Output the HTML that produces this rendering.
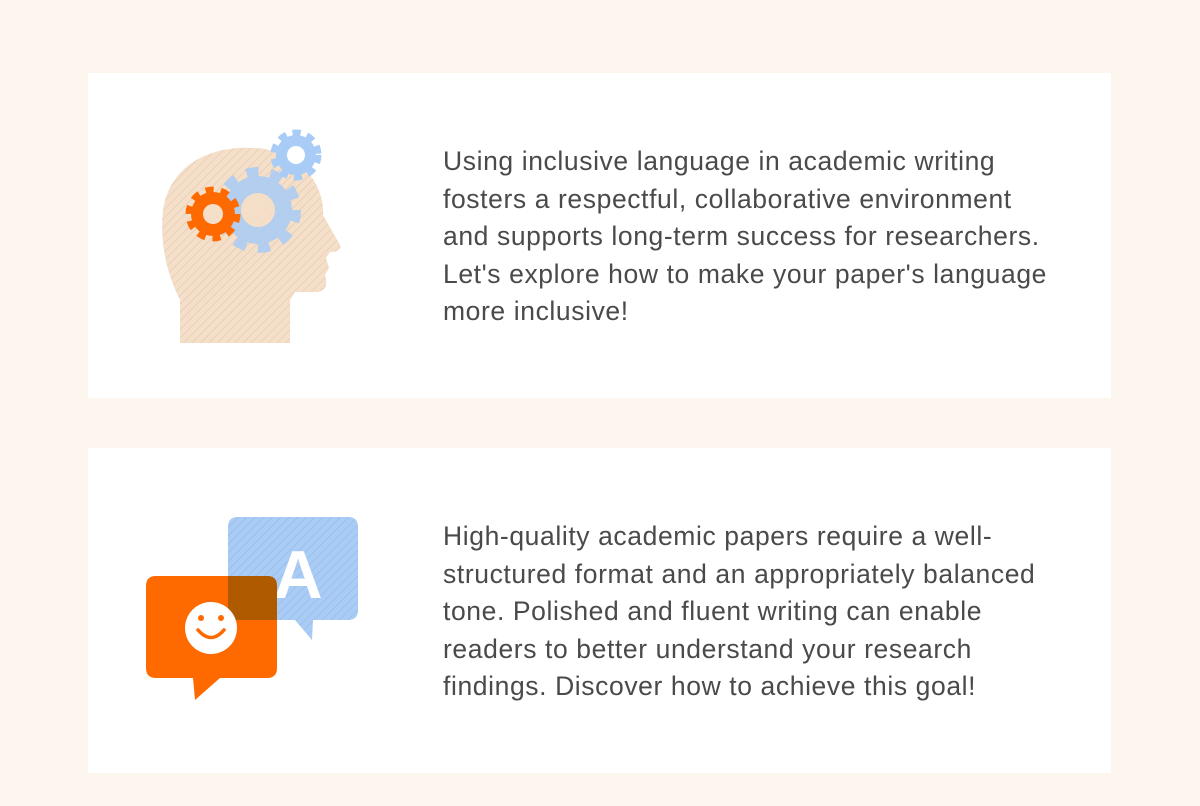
<!DOCTYPE html>
<html><head><meta charset="utf-8"><style>
body{margin:0;background:#fdf6ef;width:1200px;height:806px;position:relative;overflow:hidden;font-family:"Liberation Sans",sans-serif}
.card{position:absolute;left:88px;width:1023px;height:325px;background:#fff}
.t{position:absolute;left:355px;width:660px;white-space:nowrap;font-size:26.5px;line-height:37.5px;color:#4a4a4a;letter-spacing:0.6px}
svg{position:absolute;left:0;top:0}
</style></head><body>
<div class="card" style="top:73px"><div class="t" style="top:70px">Using inclusive language in academic writing<br>fosters a respectful, collaborative environment<br>and supports long-term success for researchers.<br>Let's explore how to make your paper's language<br>more inclusive!</div></div>
<div class="card" style="top:448px"><div class="t" style="top:70px">High-quality academic papers require a well-<br>structured format and an appropriately balanced<br>tone. Polished and fluent writing can enable<br>readers to better understand your research<br>findings. Discover how to achieve this goal!</div></div>
<svg width="1200" height="806">
<defs>
<pattern id="h" width="6" height="6" patternUnits="userSpaceOnUse" patternTransform="rotate(45)"><line x1="0" y1="0" x2="0" y2="6" stroke="#000" stroke-opacity="0.12" stroke-width="1"/></pattern>
</defs>
<path d="M180 343 L180 300 C165 270 160 240 163 210 C170 165 210 145 255 148 C300 150 325 185 323 215 L340 245 C342 250 336 252 330 252 L326 258 L329 268 L325 275 C328 285 326 290 318 292 L295 292 L290 300 L290 343 Z" fill="#f5dfc8"/>
<path d="M180 343 L180 300 C165 270 160 240 163 210 C170 165 210 145 255 148 C300 150 325 185 323 215 L340 245 C342 250 336 252 330 252 L326 258 L329 268 L325 275 C328 285 326 290 318 292 L295 292 L290 300 L290 343 Z" fill="url(#h)"/>
<g opacity="0.85">
<circle cx="258" cy="210" r="34" fill="#a8ccf5"/>
<circle cx="258" cy="210" r="38" fill="none" stroke="#a8ccf5" stroke-width="10" stroke-dasharray="12 11.9"/>
<circle cx="258" cy="210" r="17" fill="#f5dfc8"/>
</g>
<circle cx="213" cy="214" r="22" fill="#ff6a00"/>
<circle cx="213" cy="214" r="24" fill="none" stroke="#ff6a00" stroke-width="7" stroke-dasharray="8 7.08"/>
<circle cx="213" cy="214" r="10" fill="#f5dfc8"/>
<circle cx="296" cy="155" r="20" fill="#a8ccf5"/>
<circle cx="296" cy="155" r="22" fill="none" stroke="#a8ccf5" stroke-width="7" stroke-dasharray="8 6.3"/>
<circle cx="296" cy="155" r="9" fill="#fff"/>
<path d="M238 517 H348 Q358 517 358 527 V610 Q358 620 348 620 H313 L312 640 L295 620 H238 Q228 620 228 610 V527 Q228 517 238 517Z" fill="#a8ccf5"/>
<path d="M238 517 H348 Q358 517 358 527 V610 Q358 620 348 620 H313 L312 640 L295 620 H238 Q228 620 228 610 V527 Q228 517 238 517Z" fill="url(#h)"/>
<text x="298" y="598" font-family="Liberation Sans,sans-serif" font-weight="bold" font-size="68" fill="#fff" text-anchor="middle">A</text>
<path d="M156 576 H267 Q277 576 277 586 V668 Q277 678 267 678 H220 L195 700 L193 678 H156 Q146 678 146 668 V586 Q146 576 156 576Z" fill="#ff6a00"/>
<path d="M228 576 H267 Q277 576 277 586 V620 H228Z" fill="#b05a00"/>
<circle cx="211" cy="628" r="26" fill="#fff"/>
<circle cx="201" cy="618" r="3" fill="#ff6a00"/>
<circle cx="221" cy="618" r="3" fill="#ff6a00"/>
<path d="M198 630 Q211 645 224 630" fill="none" stroke="#ff6a00" stroke-width="3.5" stroke-linecap="round"/>
</svg>
</body></html>
